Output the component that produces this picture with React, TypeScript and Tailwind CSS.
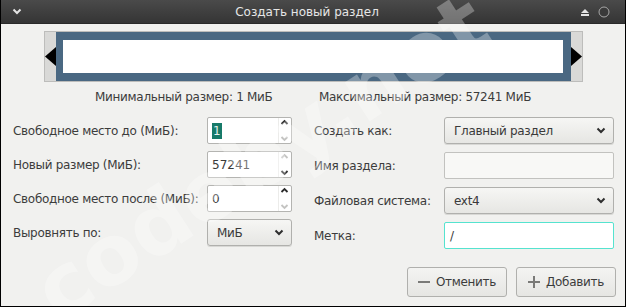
import React from "react";

const Chevron = ({ className = "" }: { className?: string }) => (
  <svg width="10" height="7" viewBox="0 0 10 7" className={className}>
    <path d="M1.5 1.5 L5 5 L8.5 1.5" fill="none" stroke="currentColor" strokeWidth="2" />
  </svg>
);

const Spin = ({ value, upActive, downActive, selected }: { value: string; upActive: boolean; downActive: boolean; selected?: boolean }) => (
  <div className="w-[85px] h-[27px] border border-[#b4b4b1] rounded-[2px] bg-white flex items-stretch">
    <div className="flex-1 flex items-center pl-[4px] text-[12px] tracking-normal text-[#3a3a3a]">
      {selected ? <span className="bg-[#177a69] text-[#e8f0ee] px-[1px] leading-[16px]">{value}</span> : <span>{value}</span>}
    </div>
    <div className="w-[12px] flex flex-col items-center justify-center mr-[1px] border-l border-[#ececea]">
      <svg width="9" height="12" viewBox="0 0 9 12" className={upActive ? "text-[#2b2b2b]" : "text-[#c4c4c2]"}>
        <path d="M1.5 5 L4.5 2 L7.5 5" fill="none" stroke="currentColor" strokeWidth="1.8" />
      </svg>
      <svg width="9" height="12" viewBox="0 0 9 12" className={downActive ? "text-[#2b2b2b]" : "text-[#c4c4c2]"}>
        <path d="M1.5 6 L4.5 9 L7.5 6" fill="none" stroke="currentColor" strokeWidth="1.8" />
      </svg>
    </div>
  </div>
);

const Combo = ({ value, w }: { value: string; w: string }) => (
  <div className={`${w} h-[27px] border border-[#b0b0ad] rounded-[3px] bg-gradient-to-b from-[#f6f6f4] to-[#e6e6e3] flex items-center justify-between pl-[9px] pr-[7px] text-[12px] text-[#3a3a3a] shadow-[0_1px_0_#d8d8d5]`}>
    <span>{value}</span>
    <Chevron className="text-[#2e2e2e]" />
  </div>
);

export default function App() {
  return (
    <div className="w-[626px] h-[307px] relative overflow-hidden bg-[#f1f1ef] border-x border-b border-black flex flex-col font-['DejaVu_Sans',sans-serif] text-[#3c3c3c] tracking-[-0.3px]">
      {/* Title bar */}
      <div className="h-[24px] bg-gradient-to-b from-[#4a4a4a] to-[#353535] border-b border-[#2a2a2a] flex items-center relative">
        <div className="w-[32px] flex justify-center text-[#e4e4e4]">
          <Chevron />
        </div>
        <div className="flex-1 text-center text-[12px] text-[#e6e6e6] tracking-normal">Создать новый раздел</div>
        <div className="flex items-center gap-[9px] pr-[15px]">
          <svg width="8" height="8" viewBox="0 0 8 8">
            <path d="M0 5 L4 1 L8 5 Z" fill="#e4e4e4" />
            <rect x="0" y="6" width="8" height="2" fill="#e4e4e4" />
          </svg>
          <svg width="12" height="12" viewBox="0 0 12 12">
            <circle cx="6" cy="6" r="5" fill="#3a3a3a" stroke="#a8a8a8" strokeWidth="1" />
          </svg>
        </div>
      </div>

      {/* Partition visual */}
      <div className="ml-[43px] mt-[7px] w-[539px] h-[51px] border border-[#bdbdbb] flex">
        <div className="w-[11px] bg-[#d9d9d7] flex items-center">
          <svg width="11" height="19" viewBox="0 0 11 19"><path d="M11 0 L0 9.5 L11 19 Z" fill="#000" /></svg>
        </div>
        <div className="flex-1 bg-[#4a6882] p-[8px_8px_8px_7px]">
          <div className="w-full h-full bg-white" />
        </div>
        <div className="w-[11px] bg-[#d9d9d7] flex items-center">
          <svg width="11" height="19" viewBox="0 0 11 19"><path d="M0 0 L11 9.5 L0 19 Z" fill="#000" /></svg>
        </div>
      </div>

      {/* Size labels */}
      <div className="flex text-[12px] mt-[7px] h-[16px] leading-[16px]">
        <div className="ml-[94px] w-[224px]">Минимальный размер: 1 МиБ</div>
        <div>Максимальный размер: 57241 МиБ</div>
      </div>

      {/* Form */}
      <div className="flex mt-[12px] text-[12px]">
        <div className="pl-[12px] w-[313px] flex flex-col gap-[7px]">
          <div className="flex items-center h-[27px]">
            <div className="w-[194px]">Свободное место до (МиБ):</div>
            <Spin value="1" upActive={true} downActive={false} selected />
          </div>
          <div className="flex items-center h-[27px]">
            <div className="w-[194px]">Новый размер (МиБ):</div>
            <Spin value="57241" upActive={false} downActive={true} />
          </div>
          <div className="flex items-center h-[27px]">
            <div className="w-[194px]">Свободное место после (МиБ):</div>
            <Spin value="0" upActive={true} downActive={false} />
          </div>
          <div className="flex items-center h-[27px]">
            <div className="w-[194px]">Выровнять по:</div>
            <Combo value="МиБ" w="w-[85px]" />
          </div>
        </div>
        <div className="flex flex-col gap-[8px]">
          <div className="flex items-center h-[27px]">
            <div className="w-[130px]">Создать как:</div>
            <Combo value="Главный раздел" w="w-[170px]" />
          </div>
          <div className="flex items-center h-[27px]">
            <div className="w-[130px]">Имя раздела:</div>
            <div className="w-[170px] h-[27px] border border-[#c2c2bf] rounded-[2px] bg-[#f8f8f6]" />
          </div>
          <div className="flex items-center h-[27px]">
            <div className="w-[130px]">Файловая система:</div>
            <Combo value="ext4" w="w-[170px]" />
          </div>
          <div className="flex items-center h-[27px]">
            <div className="w-[130px]">Метка:</div>
            <div className="w-[170px] h-[27px] border border-[#55e3cf] rounded-[2px] bg-white flex items-center pl-[5px]">/</div>
          </div>
        </div>
      </div>

      {/* Buttons */}
      <div className="flex justify-end gap-[9px] pr-[9px] mt-[18px] text-[12px]">
        <div className="w-[100px] h-[30px] border border-[#b0b0ad] rounded-[3px] bg-gradient-to-b from-[#f4f4f2] to-[#e6e6e3] flex items-center justify-center gap-[6px]">
          <svg width="12" height="12" viewBox="0 0 12 12"><rect x="0" y="5" width="12" height="2" fill="#7a7a78" /></svg>
          <span>Отменить</span>
        </div>
        <div className="w-[100px] h-[30px] border border-[#b0b0ad] rounded-[3px] bg-gradient-to-b from-[#f4f4f2] to-[#e6e6e3] flex items-center justify-center gap-[6px]">
          <svg width="12" height="12" viewBox="0 0 12 12"><rect x="0" y="5" width="12" height="2" fill="#7a7a78" /><rect x="5" y="0" width="2" height="12" fill="#7a7a78" /></svg>
          <span>Добавить</span>
        </div>
      </div>

      {/* Watermark */}
      <div className="absolute left-[0px] top-[115px] text-[84px] font-bold text-white opacity-30 rotate-[-33deg] pointer-events-none whitespace-nowrap tracking-normal leading-none">
        codeby.net
      </div>
    </div>
  );
}
